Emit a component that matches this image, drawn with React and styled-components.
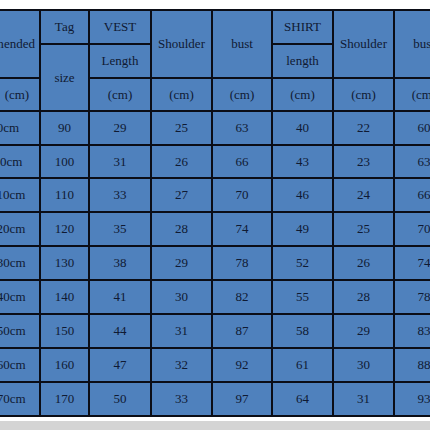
import React from "react";
import styled, { createGlobalStyle } from "styled-components";

const Global = createGlobalStyle`
  html, body { margin: 0; padding: 0; background: #ffffff; }
  body { width: 430px; height: 430px; overflow: hidden; }
`;

const Page = styled.div`
  width: 430px;
  height: 430px;
  display: flex;
  flex-direction: column;
  overflow: hidden;
  background: #ffffff;
`;

const Clip = styled.div`
  padding-top: 9px;
  overflow: hidden;
  width: 430px;
`;

const Table = styled.table`
  border-collapse: collapse;
  table-layout: fixed;
  margin-left: -49px;
  width: ${(p) => p.$w}px;
  font-family: "Liberation Serif", "Times New Roman", serif;
  font-size: 13px;
  color: #0f1a33;
`;

const Row = styled.tr`
  height: ${(p) => p.$h}px;
`;

const Cell = styled.td`
  border: 2px solid #0b0d16;
  background: #4f81bd;
  padding: 0;
  text-align: center;
  vertical-align: middle;
  white-space: nowrap;
  overflow: hidden;
`;

const Bottom = styled.div`
  margin-top: 4px;
  flex: 1;
  background: #d4d4d4;
`;

const cols = [88, 49, 62, 61, 60, 61, 61, 60, 50];
const total = cols.reduce((a, b) => a + b, 0);

const data = [
  ["80-90cm", 90, 29, 25, 63, 40, 22, 60],
  ["90-100cm", 100, 31, 26, 66, 43, 23, 63],
  ["100-110cm", 110, 33, 27, 70, 46, 24, 66],
  ["110-120cm", 120, 35, 28, 74, 49, 25, 70],
  ["120-130cm", 130, 38, 29, 78, 52, 26, 74],
  ["130-140cm", 140, 41, 30, 82, 55, 28, 78],
  ["140-150cm", 150, 44, 31, 87, 58, 29, 83],
  ["150-160cm", 160, 47, 32, 92, 61, 30, 88],
  ["160-170cm", 170, 50, 33, 97, 64, 31, 93],
];

const heights = [34, 33, 34, 34, 34, 34, 34, 34, 34];

export default function App() {
  return (
    <Page>
      <Global />
      <Clip>
        <Table $w={total}>
          <colgroup>
            {cols.map((w, i) => (
              <col key={i} style={{ width: w }} />
            ))}
          </colgroup>
          <tbody>
            <Row $h={34}>
              <Cell rowSpan={2}>Recommended</Cell>
              <Cell>Tag</Cell>
              <Cell>VEST</Cell>
              <Cell rowSpan={2}>Shoulder</Cell>
              <Cell rowSpan={2}>bust</Cell>
              <Cell>SHIRT</Cell>
              <Cell rowSpan={2}>Shoulder</Cell>
              <Cell rowSpan={2}>bust</Cell>
              <Cell rowSpan={2}>SET</Cell>
            </Row>
            <Row $h={34}>
              <Cell rowSpan={2}>size</Cell>
              <Cell>Length</Cell>
              <Cell>length</Cell>
            </Row>
            <Row $h={33}>
              <Cell>Height &nbsp;(cm)</Cell>
              <Cell>(cm)</Cell>
              <Cell>(cm)</Cell>
              <Cell>(cm)</Cell>
              <Cell>(cm)</Cell>
              <Cell>(cm)</Cell>
              <Cell>(cm)</Cell>
              <Cell>(cm)</Cell>
            </Row>
            {data.map((r, i) => (
              <Row key={i} $h={heights[i]}>
                {r.map((v, j) => (
                  <Cell key={j}>{v}</Cell>
                ))}
                <Cell />
              </Row>
            ))}
          </tbody>
        </Table>
      </Clip>
      <Bottom />
    </Page>
  );
}
